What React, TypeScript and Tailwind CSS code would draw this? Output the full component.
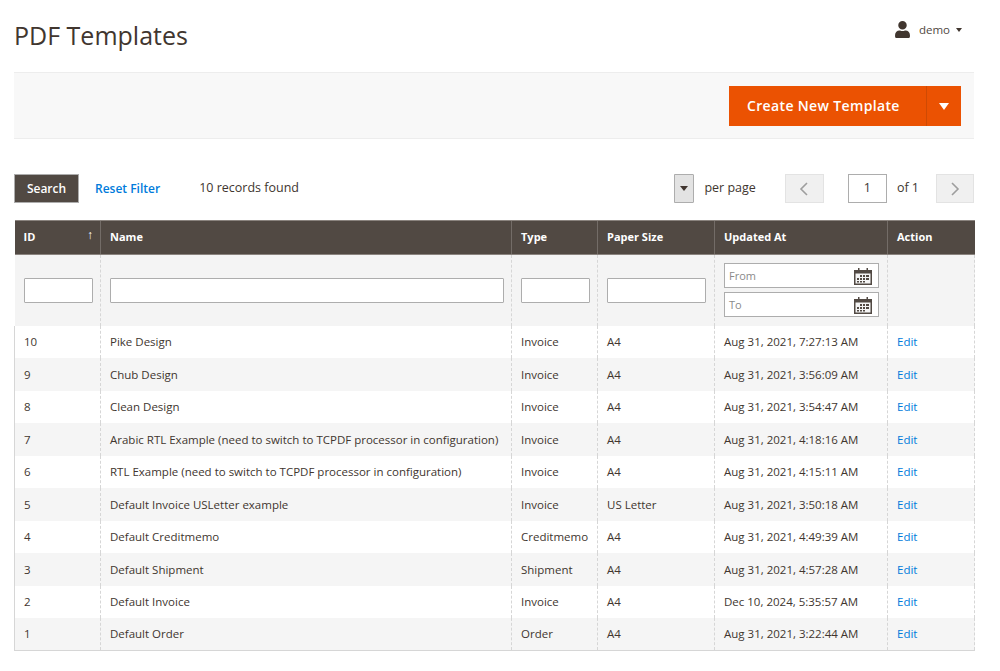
import { FaUser } from "react-icons/fa";

const ROWS = [
  ["10", "Pike Design", "Invoice", "A4", "Aug 31, 2021, 7:27:13 AM"],
  ["9", "Chub Design", "Invoice", "A4", "Aug 31, 2021, 3:56:09 AM"],
  ["8", "Clean Design", "Invoice", "A4", "Aug 31, 2021, 3:54:47 AM"],
  ["7", "Arabic RTL Example (need to switch to TCPDF processor in configuration)", "Invoice", "A4", "Aug 31, 2021, 4:18:16 AM"],
  ["6", "RTL Example (need to switch to TCPDF processor in configuration)", "Invoice", "A4", "Aug 31, 2021, 4:15:11 AM"],
  ["5", "Default Invoice USLetter example", "Invoice", "US Letter", "Aug 31, 2021, 3:50:18 AM"],
  ["4", "Default Creditmemo", "Creditmemo", "A4", "Aug 31, 2021, 4:49:39 AM"],
  ["3", "Default Shipment", "Shipment", "A4", "Aug 31, 2021, 4:57:28 AM"],
  ["2", "Default Invoice", "Invoice", "A4", "Dec 10, 2024, 5:35:57 AM"],
  ["1", "Default Order", "Order", "A4", "Aug 31, 2021, 3:22:44 AM"],
];

const HEAD = ["ID", "Name", "Type", "Paper Size", "Updated At", "Action"];

function CalendarIcon() {
  return (
    <svg width="18" height="18" viewBox="0 0 18 18" className="shrink-0">
      <path d="M0 3h18v15H0z" fill="#514943" />
      <path d="M1.5 6.5h15v10h-15z" fill="#f4f4f4" />
      <path d="M4 1h1.5v4H4zM12.5 1H14v4h-1.5z" fill="#514943" />
      <path
        d="M6 8h2v2H6zM9 8h2v2H9zM12 8h3v2h-3zM3 11h2v2H3zM6 11h2v2H6zM9 11h2v2H9zM12 11h3v2h-3zM3 14h2v1.5H3zM6 14h2v1.5H6zM9 14h2v1.5H9z"
        fill="#514943"
      />
    </svg>
  );
}

function DateField({ label }: { label: string }) {
  return (
    <div className="flex h-[25px] w-[155px] items-center justify-between border border-[#adadad] bg-white pl-[4px] pr-[6px] text-[11px] text-[#8a8a8a]">
      <span>{label}</span>
      <CalendarIcon />
    </div>
  );
}

function Chevron({ left }: { left?: boolean }) {
  return (
    <svg width="10" height="16" viewBox="0 0 10 16" fill="none" stroke="#9e9e9e" strokeWidth="1.6">
      <path d={left ? "M8 2 2 8l6 6" : "M2 2l6 6-6 6"} />
    </svg>
  );
}

const cellBorder = "border-l border-dashed border-l-[#d6d6d6]";

export default function App() {
  return (
    <div className="h-[671px] overflow-hidden bg-white text-[#41362f] font-['Open_Sans',sans-serif]">
      <header className="flex h-[72px] items-start justify-between pl-[14px] pr-[38px]">
        <h1 className="mt-[18px] text-[25px] leading-[34px] text-[#41362f]">PDF Templates</h1>
        <div className="mt-[21px] flex items-center text-[11.5px] text-[#514943]">
          <FaUser className="h-[17px] w-[17px] text-[#41362f]" />
          <span className="ml-[8px]">demo</span>
          <span className="ml-[6px] mt-[1px] h-0 w-0 border-x-[3px] border-t-[4px] border-x-transparent border-t-[#41362f]" />
        </div>
      </header>

      <div className="mx-[14px] mr-[26px] flex h-[67px] items-center justify-end border-y border-[#ededed] bg-[#f8f8f8] pr-[13px]">
        <div className="flex h-[40px] bg-[#eb5202] text-white">
          <div className="flex w-[197px] items-center pl-[18px] text-[14px] font-semibold tracking-[0.35px]">
            Create New Template
          </div>
          <div className="flex w-[35px] items-center justify-center border-l border-[#cf4a03]">
            <span className="mt-[2px] h-0 w-0 border-x-[5px] border-t-[7px] border-x-transparent border-t-white" />
          </div>
        </div>
      </div>

      <div className="mx-[14px] mr-[26px] mt-[35px] flex h-[29px] items-center text-[12.5px]">
        <button className="h-[29px] w-[65px] border border-[#adadad] bg-[#514943] text-[12px] font-semibold text-white">
          Search
        </button>
        <span className="ml-[16px] text-[12px] font-semibold text-[#007bdb]">Reset Filter</span>
        <span className="ml-[39px] text-[#41362f]">10 records found</span>
        <div className="ml-auto flex items-center">
          <div className="flex h-[29px] w-[20px] items-center justify-center rounded-r-[1px] border border-[#adadad] bg-[#e3e3e3]">
            <span className="h-0 w-0 border-x-[4px] border-t-[5px] border-x-transparent border-t-[#41362f]" />
          </div>
          <span className="ml-[10px]">per page</span>
          <div className="ml-[29px] flex h-[29px] w-[39px] items-center justify-center border border-[#e3e3e3] bg-[#f0f0f0]">
            <Chevron left />
          </div>
          <div className="ml-[24px] flex h-[29px] w-[39px] items-center justify-center border border-[#adadad] bg-white">
            1
          </div>
          <span className="ml-[10px]">of 1</span>
          <div className="ml-[17px] flex h-[29px] w-[38px] items-center justify-center border border-[#e3e3e3] bg-[#f0f0f0]">
            <Chevron />
          </div>
        </div>
      </div>

      <table className="ml-[14px] mt-[17px] w-[960px] table-fixed border-collapse text-[11.5px]">
        <colgroup>
          <col className="w-[86px]" />
          <col className="w-[411px]" />
          <col className="w-[86px]" />
          <col className="w-[117px]" />
          <col className="w-[173px]" />
          <col className="w-[87px]" />
        </colgroup>
        <thead>
          <tr className="h-[34px] bg-[#514943] text-white">
            {HEAD.map((h, i) => (
              <th
                key={h}
                className={`relative border-y border-[#8a837e] px-[9px] text-left text-[11px] font-bold ${
                  i > 0 ? "border-l border-l-[#736c67]" : ""
                }`}
              >
                {h}
                {i === 0 && <span className="absolute right-[7px] top-[5px] text-[12px] font-normal">↑</span>}
              </th>
            ))}
          </tr>
          <tr className="h-[71px] bg-[#f4f4f4]">
            <td className="px-[9px]">
              <div className="h-[25px] w-[69px] rounded-[1px] border border-[#adadad] bg-white" />
            </td>
            <td className={`px-[9px] ${cellBorder}`}>
              <div className="h-[25px] w-[394px] rounded-[1px] border border-[#adadad] bg-white" />
            </td>
            <td className={`px-[9px] ${cellBorder}`}>
              <div className="h-[25px] w-[69px] rounded-[1px] border border-[#adadad] bg-white" />
            </td>
            <td className={`px-[9px] ${cellBorder}`}>
              <div className="h-[25px] w-[99px] rounded-[1px] border border-[#adadad] bg-white" />
            </td>
            <td className={`px-[9px] ${cellBorder}`}>
              <div className="flex flex-col gap-[4px]">
                <DateField label="From" />
                <DateField label="To" />
              </div>
            </td>
            <td className={`border-r border-r-[#d6d6d6] ${cellBorder}`} />
          </tr>
        </thead>
        <tbody>
          {ROWS.map((r, idx) => (
            <tr key={r[0]} className={`h-[32.5px] ${idx % 2 ? "bg-[#f5f5f5]" : "bg-white"}`}>
              <td className="border-l border-l-[#d6d6d6] px-[9px]">{r[0]}</td>
              {r.slice(1).map((c, i) => (
                <td key={i} className={`px-[9px] ${cellBorder}`}>
                  {c}
                </td>
              ))}
              <td className={`border-r border-r-[#d6d6d6] px-[9px] text-[#007bdb] ${cellBorder}`}>Edit</td>
            </tr>
          ))}
          <tr className="h-0 border-t border-[#d6d6d6]" />
        </tbody>
      </table>
    </div>
  );
}
